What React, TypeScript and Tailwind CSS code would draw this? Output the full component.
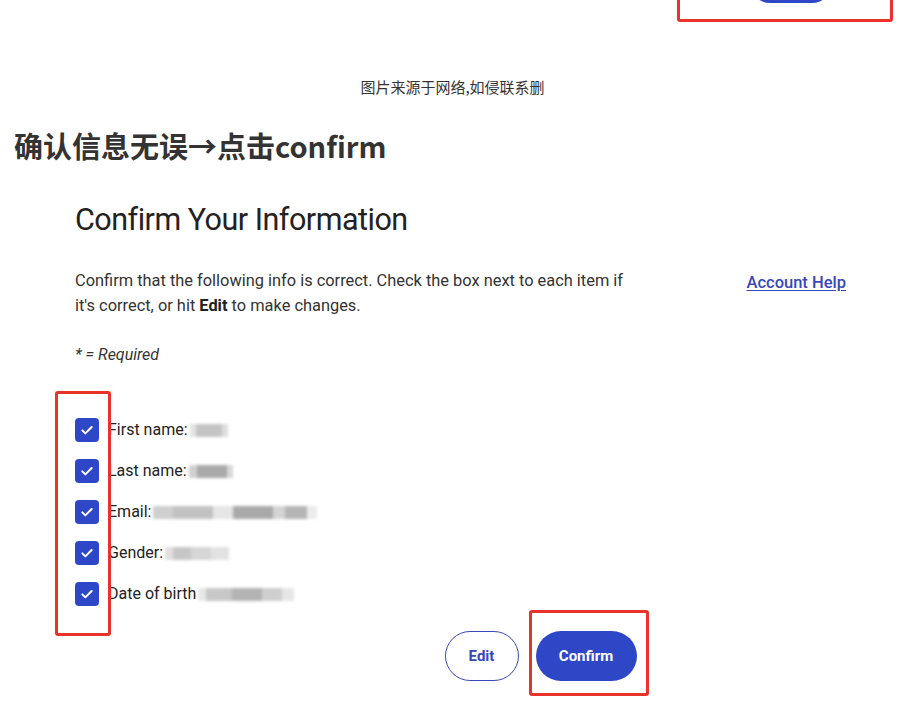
import React from "react";

function Check() {
  return (
    <span className="flex size-6 shrink-0 items-center justify-center rounded-[4px] bg-[#2d47c6]">
      <svg width="16" height="16" viewBox="0 0 24 24" fill="none" stroke="white" strokeWidth="3" strokeLinecap="round" strokeLinejoin="round">
        <path d="M5 12.5l4.5 4.5L19 7.5" />
      </svg>
    </span>
  );
}

// pixelated / blurred value
function Blur({ parts }: { parts: [number, string][] }) {
  return (
    <span className="ml-[2px] inline-flex h-[13px] items-center blur-[1.5px]">
      {parts.map(([w, c], i) => (
        <span key={i} className="h-full" style={{ width: w, background: c }} />
      ))}
    </span>
  );
}

const rows: { label: string; parts: [number, string][] }[] = [
  { label: "First name:", parts: [[6, "#e4e4e4"], [26, "#c4c4c4"], [6, "#dedede"]] },
  { label: "Last name:", parts: [[8, "#d0d0d0"], [30, "#a9a9a9"], [6, "#d8d8d8"]] },
  {
    label: "Email:",
    parts: [[20, "#cfcfcf"], [40, "#c2c2c2"], [20, "#e6e6e6"], [40, "#a9a9a9"], [12, "#d4d4d4"], [22, "#b5b5b5"], [10, "#ececec"]],
  },
  { label: "Gender:", parts: [[8, "#e0e0e0"], [18, "#c6c6c6"], [20, "#d6d6d6"], [18, "#e2e2e2"]] },
  { label: "Date of birth", parts: [[8, "#e8e8e8"], [26, "#c7c7c7"], [30, "#b3b3b3"], [20, "#cfcfcf"], [12, "#e6e6e6"]] },
];

export default function App() {
  return (
    <div className="relative min-h-[724px] w-[912px] overflow-hidden bg-white">
      {/* tail of the previous screenshot */}
      <div className="relative h-[22px]">
        <div className="absolute -top-3 right-[19px] h-[34px] w-[216px] overflow-hidden rounded-[3px] border-[3px] border-[#e8322a]">
          <div className="absolute left-[70px] top-[-28px] h-[40px] w-[82px] rounded-full bg-[#2d47c6]" />
        </div>
      </div>

      <p className="mt-[56px] pr-[7px] text-center text-[15px] leading-[18px] text-[#333] [font-family:'Noto_Sans_CJK_SC',sans-serif]">
        图片来源于网络,如侵联系删
      </p>

      <h1 className="mt-[30px] pl-[14px] text-[29px] font-semibold leading-[38px] text-[#333] [font-family:'Noto_Sans_CJK_SC',sans-serif]">
        确认信息无误→点击confirm
      </h1>

      <section className="relative mt-[38px] pl-[75px] pr-[66px] text-[#333] [font-family:Roboto,sans-serif]">
        <h2 className="text-[30.5px] leading-[36px] tracking-[-0.5px] text-[#222]">Confirm Your Information</h2>

        <div className="mt-[30px] flex items-start justify-between">
          <p className="w-[556px] text-[16.4px] leading-[25px]">
            Confirm that the following info is correct. Check the box next to each item if it's correct, or hit{" "}
            <b className="font-bold text-[#222]">Edit</b> to make changes.
          </p>
          <a className="mt-[2px] text-[16.5px] font-medium leading-[25px] text-[#3848b8] underline underline-offset-2">
            Account Help
          </a>
        </div>

        <p className="mt-[25px] text-[16px] italic leading-[24px]">* = Required</p>

        <ul className="mt-[51px] flex flex-col gap-[17px]">
          {rows.map((r) => (
            <li key={r.label} className="flex h-6 items-center gap-[9px] text-[16px] text-[#222]">
              <Check />
              <span className="flex items-center">
                {r.label}
                <Blur parts={r.parts} />
              </span>
            </li>
          ))}
        </ul>

        <div className="mt-[25px] flex justify-center gap-[17px] pl-[160px]">
          <button className="h-[50px] w-[74px] rounded-full border border-[#3848b8] text-[15px] font-bold text-[#3848b8]">
            Edit
          </button>
          <button className="h-[50px] w-[101px] rounded-full bg-[#2d47c6] text-[15px] font-bold text-white">
            Confirm
          </button>
        </div>

        {/* annotation boxes */}
        <div className="pointer-events-none absolute left-[55px] top-[189px] h-[245px] w-[56px] rounded-[3px] border-[3px] border-[#e8322a]" />
        <div className="pointer-events-none absolute left-[529px] top-[408px] h-[86px] w-[120px] rounded-[3px] border-[3px] border-[#e8322a]" />
      </section>
    </div>
  );
}
